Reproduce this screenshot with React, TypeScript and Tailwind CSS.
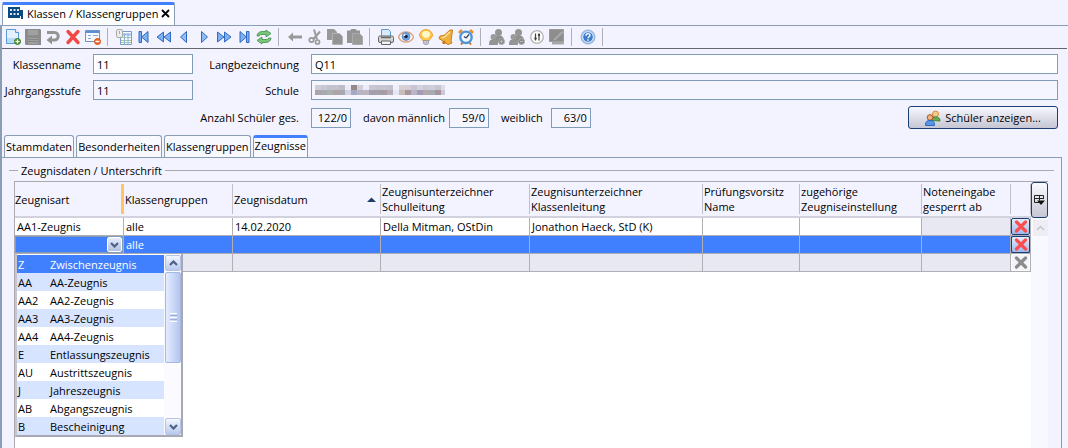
import { useState } from "react";
import type { ReactNode } from "react";

const columns = [
  { label: "Zeugnisart", width: "w-[109px]" },
  { label: "Klassengruppen", width: "w-[109px]" },
  { label: "Zeugnisdatum", width: "w-[148px]", sorted: true },
  { label: "Zeugnisunterzeichner Schulleitung", width: "w-[149px]" },
  { label: "Zeugnisunterzeichner Klassenleitung", width: "" },
  { label: "Prüfungsvorsitz Name", width: "w-[97px]" },
  { label: "zugehörige Zeugniseinstellung", width: "w-[122px]" },
  { label: "Noteneingabe gesperrt ab", width: "w-[89px]" },
  { label: "", width: "w-[20px]" },
];

const reportTypes = [
  ["Z", "Zwischenzeugnis"],
  ["AA", "AA-Zeugnis"],
  ["AA2", "AA2-Zeugnis"],
  ["AA3", "AA3-Zeugnis"],
  ["AA4", "AA4-Zeugnis"],
  ["E", "Entlassungszeugnis"],
  ["AU", "Austrittszeugnis"],
  ["J", "Jahreszeugnis"],
  ["AB", "Abgangszeugnis"],
  ["B", "Bescheinigung"],
];

const mosaic = [
  ["#cfccd8", "#c9c8d2", "#c4c1d0", "#c6c2cc", "#bcbcc9", "#ececf8", "#968884", "#d0d0dd", "#ececf8", "#cac6d6", "#c6c4d0", "#c9c6d2", "#c5c3d0", "#f0f0fb", "#d8d0d4", "#d2cedc", "#c8c4d0", "#d4d2de", "#cccad6", "#cfcfdc", "#c9c6d4", "#dcdce8"],
  ["#a9a3ab", "#a9a9b0", "#a8b0b0", "#b0a3a8", "#a9a7b0", "#d2d0e4", "#a6a9c4", "#b5b5c4", "#bdb4bd", "#a49dac", "#a3a0aa", "#a89ca4", "#b5acb8", "#e6e6f4", "#c8bcb9", "#a4969a", "#b9b4cc", "#a49cb4", "#b2a9ac", "#a3acb0", "#a8949c", "#ccc6e0"],
];

function Icon({ children }: { children: ReactNode }) {
  return (
    <svg width="16" height="16" viewBox="0 0 16 16" fill="none" aria-hidden="true">
      {children}
    </svg>
  );
}

function ToolButton({ label, children, disabled }: { label: string; children: ReactNode; disabled?: boolean }) {
  return (
    <button type="button" aria-label={label} disabled={disabled} className="flex size-5 shrink-0 items-center justify-center">
      <Icon>{children}</Icon>
    </button>
  );
}

const Separator = () => <div className="ml-1 mr-1.5 h-[18px] w-px shrink-0 bg-[#b0b0b8]" />;

function Toolbar() {
  return (
    <div className="flex h-[22px] items-center pl-px">
      <ToolButton label="Neu">
        <path d="M1.500.5h9l3 3v11h-12z" fill="#e4f1fd" stroke="#5b9bd5" />
        <path d="M10.500.5v3h3" fill="#fff" stroke="#5b9bd5" />
        <path d="M2 9h11v5H2z" fill="#b9daf5" />
        <circle cx="12.500" cy="12.500" r="3" fill="#5a9e3a" stroke="#3c7a22" />
        <path d="M12.500 10.500v4M10.500 12.500h4" stroke="#fff" strokeWidth="1.200" />
      </ToolButton>
      <ToolButton label="Speichern" disabled>
        <path d="M0 0h15l1 1v15H1l-1-1z" fill="#8c8c8c" />
        <path d="M3 1h10v5H3zM3 9h10v6H3z" fill="#a0a0a0" />
        <path d="M3 10.500h10M3 12.500h10" stroke="#858585" />
      </ToolButton>
      <ToolButton label="Rückgängig" disabled>
        <path d="M2 3.500h7.500a3.700 3.700 0 0 1 0 7.500H6" stroke="#949494" strokeWidth="3" />
        <path d="M7 6.500V15.500L1.500 11z" fill="#949494" />
      </ToolButton>
      <ToolButton label="Löschen">
        <path d="M3 2.500l10 11M13 2.500l-10 11" stroke="#f04a45" strokeWidth="3.400" strokeLinecap="round" />
      </ToolButton>
      <ToolButton label="Formular ausblenden">
        <path d="M.5 1.500h14v11H.5z" fill="#f5f8fd" stroke="#6a94cc" />
        <path d="M1 2h13v2H1z" fill="#5b8fd0" />
        <path d="M3 6.500h3M8 6.500h5M3 9.500h3" stroke="#8aa8d0" />
        <circle cx="12.500" cy="12.500" r="3" fill="#ee6420" stroke="#d9530f" />
        <path d="M10.500 12.500h4" stroke="#fff" strokeWidth="1.500" />
      </ToolButton>
      <Separator />
      <ToolButton label="Tabelle">
        <path d="M4.500 2.500h11v13h-11z" fill="#f4f9fe" stroke="#7d9cc0" />
        <path d="M5 5.500h10" stroke="#9cc0e8" strokeWidth="2" />
        <path d="M5 8.500h10M5 11.500h10M5 13.500h10" stroke="#9fcaa4" />
        <path d="M8.500 4v11M12 4v11" stroke="#8fb0d8" />
        <rect x=".5" y=".5" width="6" height="8" rx="1.500" fill="#ececec" stroke="#aaa" />
        <path d="M3.500 2v3" stroke="#aaa" />
      </ToolButton>
      <ToolButton label="Erster Datensatz">
        <path d="M3 2.500h2.500V8L12 2.500v11L5.500 8v5.500H3z" fill="#7fb0f0" stroke="#2f69c4" />
      </ToolButton>
      <ToolButton label="Schnell zurück">
        <path d="M7.500 3v10L1 8zM14.500 3v10L8 8z" fill="#7fb0f0" stroke="#2f69c4" />
      </ToolButton>
      <ToolButton label="Zurück">
        <path d="M10.500 2.500v11L4.500 8z" fill="#8fbcf5" stroke="#2f69c4" />
      </ToolButton>
      <ToolButton label="Weiter">
        <path d="M5.500 2.500v11l6-5.500z" fill="#8fbcf5" stroke="#2f69c4" />
      </ToolButton>
      <ToolButton label="Schnell vor">
        <path d="M1.500 3v10L8 8zM8.500 3v10L15 8z" fill="#7fb0f0" stroke="#2f69c4" />
      </ToolButton>
      <ToolButton label="Letzter Datensatz">
        <path d="M13 2.500h-2.500V8L4 2.500v11L10.500 8v5.500H13z" fill="#7fb0f0" stroke="#2f69c4" />
      </ToolButton>
      <ToolButton label="Aktualisieren">
        <path d="M1 7c0-3 3-4.500 5-4.500h4V1l5 3.500L10 8V5.500H6C4 5.500 3.500 6 3.500 7z" fill="#7cc47c" stroke="#3e8f46" strokeWidth=".8" />
        <path d="M15 9c0 3-3 4.500-5 4.500H6V15l-5-3.500L6 8v2.500h4c2 0 2.500-.5 2.500-1.500z" fill="#7cc47c" stroke="#3e8f46" strokeWidth=".8" />
      </ToolButton>
      <Separator />
      <ToolButton label="Zurück zur Liste" disabled>
        <path d="M1 8l5-4.500v3h9v3H6v3z" fill="#999" />
      </ToolButton>
      <ToolButton label="Ausschneiden" disabled>
        <path d="M7 .5l3 10M13 2.500L6 10.500" stroke="#999" strokeWidth="2" />
        <circle cx="4.500" cy="11" r="2.200" stroke="#999" strokeWidth="1.700" />
        <circle cx="10.500" cy="13" r="2" stroke="#999" strokeWidth="1.700" />
      </ToolButton>
      <ToolButton label="Kopieren" disabled>
        <path d="M0 0h7l3 3v8H0z" fill="#999" />
        <path d="M5.500 4.500h7l3 3v8h-10z" fill="#949494" stroke="#b4b4b4" />
      </ToolButton>
      <ToolButton label="Einfügen" disabled>
        <path d="M0 1.500h3L4.500 0h4L10 1.500h3V14H0z" fill="#949494" />
        <path d="M5.500 4.500h7l3 3v8h-10z" fill="#999" stroke="#aaa" />
      </ToolButton>
      <Separator />
      <ToolButton label="Drucken">
        <path d="M3.500.5h7l2 2V8h-9z" fill="#d8eafb" stroke="#5b9bd5" />
        <rect x=".5" y="7" width="15" height="6.500" rx="1.500" fill="#d4d4d4" stroke="#666" />
        <path d="M3 8.500h10" stroke="#666" strokeWidth="1.500" />
        <path d="M3.500 12h9v3.500h-9z" fill="#f4f4f4" stroke="#666" />
      </ToolButton>
      <ToolButton label="Vorschau">
        <path d="M.5 8C2 4.500 5 3 8 3s6 1.500 7.500 5C14 11.500 11 13 8 13S2 11.500.5 8z" fill="#fff" stroke="#dca580" strokeWidth="1.500" />
        <circle cx="8" cy="7.500" r="4" fill="#74a8e4" stroke="#4a7cc0" strokeWidth=".7" />
        <circle cx="8" cy="7.500" r="1.800" fill="#16233f" />
        <circle cx="6.500" cy="6" r="1" fill="#fff" />
      </ToolButton>
      <ToolButton label="Hinweis">
        <path d="M8 .5a6.500 6 0 0 1 6.500 5.500c0 2.500-2.500 3.500-3.500 6H5C4 9.500 1.500 8.500 1.500 6A6.500 6 0 0 1 8 .5z" fill="#fcc84b" stroke="#f0a53a" />
        <path d="M4 5c0-2 2-3 4-3s4 1 4 3-2 4-4 4-4-2-4-4z" fill="#fff6cc" />
        <path d="M5.500 11.500h5v3l-1.500 1H7l-1.500-1z" fill="#c3c3cb" stroke="#8e8e9d" strokeWidth=".7" />
      </ToolButton>
      <ToolButton label="Erinnerung">
        <path d="M14.500 1L13 12l1 2-4 1.500-9-6 1-2.500 4-.5L12 1z" fill="#f0b13c" stroke="#c47d1c" />
        <path d="M12 3L6.500 8l-3 .7" stroke="#ffe09a" strokeWidth="1.500" />
        <circle cx="6" cy="13.500" r="1.800" fill="#c87918" />
      </ToolButton>
      <ToolButton label="Termin">
        <path d="M1 4l3-3M15 4l-3-3" stroke="#e6912c" strokeWidth="2.800" />
        <path d="M3 15.500l2-2.500M13 15.500L11 13" stroke="#cf751c" strokeWidth="2" />
        <circle cx="8" cy="8.300" r="5.700" fill="#f1f7ff" stroke="#4f94d8" strokeWidth="2.300" />
        <path d="M8 9l3-3.500M8 9L6 7.500" stroke="#345" strokeWidth="1.200" />
      </ToolButton>
      <Separator />
      <ToolButton label="Gruppe hinzufügen" disabled>
        <circle cx="9.500" cy="3.500" r="3.500" fill="#959595" />
        <path d="M4 12c0-5 2-5.500 5.500-5.500s5.500 1 5.500 6v1H4z" fill="#8f8f8f" />
        <circle cx="4.500" cy="8" r="3" fill="#9b9b9b" />
        <path d="M0 16c0-4.500 1-5.500 4.500-5.500S9 11.500 9 16z" fill="#949494" />
        <circle cx="12.500" cy="12.500" r="3" fill="#888" stroke="#aaa" />
        <path d="M12.500 11v3M11 12.500h3" stroke="#bbb" />
      </ToolButton>
      <ToolButton label="Gruppe entfernen" disabled>
        <circle cx="9.500" cy="3.500" r="3.500" fill="#959595" />
        <path d="M4 12c0-5 2-5.500 5.500-5.500s5.500 1 5.500 6v1H4z" fill="#8f8f8f" />
        <circle cx="4.500" cy="8" r="3" fill="#9b9b9b" />
        <path d="M0 16c0-4.500 1-5.500 4.500-5.500S9 11.500 9 16z" fill="#949494" />
        <circle cx="12.500" cy="12.500" r="3" fill="#888" stroke="#aaa" />
        <path d="M11 12.500h3" stroke="#bbb" />
      </ToolButton>
      <ToolButton label="Sortierung">
        <circle cx="8" cy="8" r="6.300" fill="#fcfcfc" stroke="#b4b4b4" strokeWidth="1.300" />
        <path d="M6.500 4.500v7M10 4.500v7" stroke="#444" strokeWidth="1.200" />
        <circle cx="6.500" cy="9.500" r="1.200" fill="#444" />
        <circle cx="10" cy="6" r="1.200" fill="#444" />
      </ToolButton>
      <ToolButton label="Notiz" disabled>
        <path d="M.5.500h14v12H.5z" fill="#8d8d8d" stroke="#9a9a9a" />
        <path d="M3 12.500h12v3H3z" fill="#a6a6a6" />
        <path d="M5 11l9-8.500" stroke="#aaa" strokeWidth="2" />
      </ToolButton>
      <Separator />
      <ToolButton label="Hilfe">
        <circle cx="8" cy="8" r="7" fill="#a9c6ec" stroke="#8fb0de" />
        <circle cx="8" cy="8" r="5.300" fill="#3f7ccc" stroke="#dbe9fa" />
        <path d="M6 6.700c0-2.700 4-2.700 4-.4 0 1.400-2 1.400-2 3M8 10.300v1.400" stroke="#fff" strokeWidth="1.400" />
      </ToolButton>
      <Separator />
    </div>
  );
}

const fieldClass = "h-5 min-w-0 border border-[#7f9db9] px-[3px] leading-[18px] outline-none";
const labelClass = "justify-self-end whitespace-nowrap";

function ClassForm() {
  return (
    <form className="grid grid-cols-[76px_100px_94px_1fr] items-center gap-x-3 gap-y-1.5 pl-[3px] pr-[9px] pt-[5px]">
      <label htmlFor="name" className={labelClass}>Klassenname</label>
      <input id="name" defaultValue="11" className={`${fieldClass} bg-white`} />
      <label htmlFor="long" className={labelClass}>Langbezeichnung</label>
      <input id="long" defaultValue="Q11" className={`${fieldClass} bg-white`} />

      <label htmlFor="grade" className={labelClass}>Jahrgangsstufe</label>
      <input id="grade" readOnly defaultValue="11" className={`${fieldClass} bg-[#f5f5ff]`} />
      <label htmlFor="school" className={labelClass}>Schule</label>
      <div className="relative flex">
        <input id="school" readOnly className={`${fieldClass} flex-1 bg-[#f5f5ff]`} />
        <svg className="pointer-events-none absolute left-1 top-[5px]" width="130" height="10" viewBox="0 0 130 10" aria-hidden="true">
          {mosaic.map((row, y) => row.map((fill, x) => <rect key={`${x}-${y}`} x={x * 6} y={y * 5} width="6" height="5" fill={fill} />))}
        </svg>
      </div>

      <div className="col-span-2" />
      <label htmlFor="total" className={labelClass}>Anzahl Schüler ges.</label>
      <div className="flex items-center">
        <input id="total" readOnly defaultValue="122/0" className={`${fieldClass} w-10 bg-[#f5f5ff] text-right`} />
        <label htmlFor="male" className="ml-3 mr-1 whitespace-nowrap">davon männlich</label>
        <input id="male" readOnly defaultValue="59/0" className={`${fieldClass} w-10 bg-[#f5f5ff] text-right`} />
        <label htmlFor="female" className="ml-3 mr-2">weiblich</label>
        <input id="female" readOnly defaultValue="63/0" className={`${fieldClass} w-10 bg-[#f5f5ff] text-right`} />
        <button type="button" className="ml-auto flex h-[23px] w-[150px] items-center justify-center gap-1 rounded-[3px] border border-[#1c3f72] bg-linear-to-b from-[#f8f8ff] to-[#c6c6d4]">
          <Icon>
            <circle cx="10.500" cy="4" r="3" fill="#f6c98d" stroke="#d68d35" />
            <path d="M6.500 10.500c0-3 2-3.500 4-3.500s4.500.5 4.500 4z" fill="#65ad50" stroke="#3d8736" />
            <circle cx="5" cy="7.500" r="2.800" fill="#f0b380" stroke="#a85324" />
            <path d="M.5 15.500c0-4 1.500-5 4.500-5s4.500 1 4.500 5z" fill="#5896e8" stroke="#2c68bd" />
          </Icon>
          Schüler anzeigen...
        </button>
      </div>
    </form>
  );
}

function DeleteButton({ disabled }: { disabled?: boolean }) {
  return (
    <button
      type="button"
      aria-label="Zeile löschen"
      disabled={disabled}
      className="flex h-[17px] w-full items-center justify-center rounded-[2px] border border-[#1c3f72] bg-linear-to-b from-[#e6ecfb] to-[#9db8ee] disabled:border-white disabled:from-[#f4f4fa] disabled:to-[#f4f4fa]"
    >
      <svg width="14" height="13" viewBox="0 0 14 13" aria-hidden="true">
        <path d="M2.500 2l9 9M11.500 2l-9 9" stroke={disabled ? "#8c8c8c" : "#fb4f4f"} strokeWidth="3.200" strokeLinecap="round" />
      </svg>
    </button>
  );
}

function Chevron({ up, light }: { up?: boolean; light?: boolean }) {
  return (
    <svg width="9" height="6" viewBox="0 0 9 6" fill="none" aria-hidden="true">
      <path d={up ? "M1 5l3.500-3.500L8 5" : "M1 1l3.500 3.500L8 1"} stroke={light ? "#c6c6cc" : "#4d6185"} strokeWidth={light ? "1.500" : "2.200"} />
    </svg>
  );
}

function TypePopup({ selected, onSelect }: { selected: string; onSelect: (code: string) => void }) {
  return (
    <div className="absolute left-0 top-full z-10 flex w-[168px] border-2 border-t border-[#a9a9b5] border-l-[#c5c5d0] bg-white pt-px">
      <ul role="listbox" aria-label="Zeugnisart" className="flex-1">
        {reportTypes.map(([code, name]) => (
          <li
            key={code}
            role="option"
            aria-selected={code === selected}
            onClick={() => onSelect(code)}
            className="flex h-[18px] items-center pl-px text-black even:bg-[#d6e4ff] aria-selected:bg-[#4080ff] aria-selected:text-white"
          >
            <span className="w-8">{code}</span>
            <span>{name}</span>
          </li>
        ))}
      </ul>
      <div className="flex w-[17px] flex-col bg-[#fafaff] pl-px">
        <button type="button" aria-label="Nach oben" className="flex h-4 items-center justify-center rounded-[2px] border border-[#b4c4e4] bg-linear-to-b from-[#f4f7ff] to-[#b8c8ec]"><Chevron up /></button>
        <div className="mt-px flex h-[91px] flex-col items-center justify-center gap-px rounded-[2px] border border-[#a5b8de] bg-linear-to-r from-[#e4ecff] to-[#b4c5ee]">
          <i className="h-px w-[7px] bg-white" />
          <i className="h-px w-[7px] bg-[#9db0dc]" />
          <i className="h-px w-[7px] bg-white" />
          <i className="h-px w-[7px] bg-[#9db0dc]" />
          <i className="h-px w-[7px] bg-white" />
        </div>
        <button type="button" aria-label="Nach unten" className="mt-auto flex h-[17px] items-center justify-center rounded-[2px] border border-[#b4c4e4] bg-linear-to-b from-[#f4f7ff] to-[#b8c8ec]"><Chevron /></button>
      </div>
    </div>
  );
}

const cell = "h-[18px] border-b border-r border-[#b0b0b4] p-0 pl-[2px] whitespace-nowrap overflow-hidden";

function ReportTable() {
  const [selected, setSelected] = useState("Z");

  return (
    <div className="ml-3 mr-[13px] flex flex-1 border-l border-t border-[#a9a9b0] bg-white">
      <div className="min-w-0 flex-1">
        <table className="w-full table-fixed border-separate border-spacing-0">
          <thead>
            <tr>
              {columns.map((col, i) => (
                <th key={i} scope="col" className={`${col.width} h-9 border-b-2 border-[#d2d2de] bg-[#f3f3ff] p-0 text-left font-normal`}>
                  <div className={`flex h-[30px] items-center justify-between leading-[15px] ${i === 0 ? "border-r-[3px] border-[#ffc464]" : "border-r border-[#c0c0cc] pl-px"}`}>
                    {col.label}
                    {col.sorted && (
                      <svg className="mr-1" width="9" height="5" viewBox="0 0 9 5" aria-hidden="true"><path d="M0 5l4.500-4.500L9 5z" fill="#1f3f66" /></svg>
                    )}
                  </div>
                </th>
              ))}
            </tr>
          </thead>
          <tbody>
            <tr className="bg-white">
              <td className={cell}>AA1-Zeugnis</td>
              <td className={cell}>alle</td>
              <td className={cell}>14.02.2020</td>
              <td className={cell}>Della Mitman, OStDin</td>
              <td className={cell}>Jonathon Haeck, StD (K)</td>
              <td className={cell} />
              <td className={cell} />
              <td className={`${cell} bg-[#e8e8f2]`} />
              <td className="border-b border-r border-[#b0b0b4] p-0"><DeleteButton /></td>
            </tr>
            <tr className="bg-[#4080ff] text-white">
              <td className="relative border-b border-r border-[#b0b0b4] p-0">
                <div className="flex h-[17px] border border-[#7f9db9]">
                  <select aria-label="Zeugnisart" defaultValue="" className="min-w-0 flex-1 appearance-none outline-none">
                    <option value="" />
                    {reportTypes.map(([code, name]) => <option key={code} value={code}>{name}</option>)}
                  </select>
                  <span className="flex w-[15px] items-center justify-center rounded-[2px] border border-white bg-linear-to-b from-[#e6ecfb] to-[#b0bfe0]"><Chevron /></span>
                </div>
                <TypePopup selected={selected} onSelect={setSelected} />
              </td>
              <td className={cell}>alle</td>
              {[2, 3, 4, 5, 6, 7].map((i) => <td key={i} className={cell} />)}
              <td className="border-b border-r border-[#b0b0b4] p-0"><DeleteButton /></td>
            </tr>
            <tr className="bg-[#e8e8f2]">
              {[0, 1, 2, 3, 4, 5, 6, 7].map((i) => <td key={i} className={cell} />)}
              <td className="border-b border-r border-[#b0b0b4] p-0"><DeleteButton disabled /></td>
            </tr>
          </tbody>
        </table>
      </div>
      <div className="flex w-[17px] flex-col bg-[#f8f8ff]">
        <button type="button" aria-label="Spalten auswählen" className="flex h-9 items-center justify-center rounded-[3px] border border-[#1c3f72] bg-linear-to-b from-[#fafaff] to-[#c6c6d4]">
          <svg width="11" height="12" viewBox="0 0 11 12" fill="none" aria-hidden="true">
            <path d="M5 8.500H.5v-7h9V5M.5 4.500h9M5.500 1.500v5" stroke="#222" />
            <path d="M3 6.500h8L7 11z" fill="#111" />
          </svg>
        </button>
        <button type="button" aria-label="Nach oben" className="ml-[2px] mt-[2px] flex h-4 items-center justify-center bg-[#ededf3]"><Chevron up light /></button>
      </div>
    </div>
  );
}

const sections = ["Stammdaten", "Besonderheiten", "Klassengruppen", "Zeugnisse"];

export default function App() {
  const [section, setSection] = useState("Zeugnisse");

  return (
    <div className="flex min-h-screen flex-col bg-[#f3f3ff] pt-[2px] font-['Open_Sans','Noto_Sans',sans-serif] text-[11px] leading-[15px] text-black">
      <header className="flex border-b border-[#8a9db5] pl-[2px]">
        <div className="flex h-[23px] items-center gap-[3px] rounded-t-[2px] border-x border-t-[3px] border-[#8a9db5] border-t-[#4080ff] bg-white pb-1 pl-[5px] pr-1">
          <svg width="16" height="12" viewBox="0 0 16 12" aria-hidden="true">
            <path d="M0 0h12v3h3v9h-2V9h-1v2H0z" fill="#0b4a80" />
            <path d="M2 2h2v2H2zM5.500 2h2v2h-2zM9 2h2v2H9zM2 6h2v2H2zM5.500 6h2v2h-2zM9 6h2v2H9z" fill="#d6e6f4" />
          </svg>
          <h1>Klassen / Klassengruppen</h1>
          <button type="button" aria-label="Schließen">
            <svg width="9" height="9" viewBox="0 0 9 9" aria-hidden="true"><path d="M1 1l7 7M8 1L1 8" stroke="#000" strokeWidth="1.800" /></svg>
          </button>
        </div>
      </header>
      <div className="flex flex-1 flex-col border-l-2 border-[#8a9db5]">
        <Toolbar />
        <main className="mr-px flex flex-1 flex-col border-t border-[#66666e]">
          <ClassForm />
          <nav className="mt-1.5 flex items-end gap-[2px] pl-[2px]">
            {sections.map((name) => (
              <button
                key={name}
                type="button"
                aria-pressed={name === section}
                onClick={() => setSection(name)}
                className="h-[22px] whitespace-nowrap rounded-t-[3px] border border-b-0 border-[#8a9db5] bg-[#f8f8ff] px-px aria-pressed:border-t-[3px] aria-pressed:border-t-[#4080ff] aria-pressed:pb-1"
              >
                {name}
              </button>
            ))}
          </nav>
          <section className="mr-[5px] flex flex-1 flex-col border-r border-t border-[#8a9db5] pt-[5px]">
            <div className="mr-[7px] flex items-center gap-[3px] pb-[3px] pl-[7px]">
              <hr className="w-[9px] border-[#a9a9b0]" />
              <h2>Zeugnisdaten / Unterschrift</h2>
              <hr className="flex-1 border-[#a9a9b0]" />
            </div>
            <ReportTable />
          </section>
        </main>
      </div>
    </div>
  );
}
